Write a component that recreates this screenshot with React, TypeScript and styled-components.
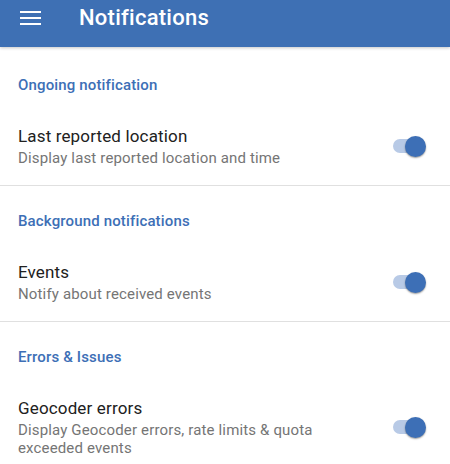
import React from "react";
import styled, { createGlobalStyle } from "styled-components";

const GlobalStyle = createGlobalStyle`
  html, body { margin: 0; padding: 0; background: #ffffff; }
  body { font-family: Roboto, "Noto Sans", Arial, sans-serif; -webkit-font-smoothing: antialiased; }
  * { box-sizing: border-box; }
`;

const Page = styled.div`
  width: 450px;
  height: 464px;
  overflow: hidden;
  background: #ffffff;
  position: relative;
`;

const Toolbar = styled.header`
  height: 47px;
  background: #3e70b4;
  display: flex;
  align-items: center;
  padding: 0 0 11px 20px;
  box-shadow: 0 1px 3px rgba(0, 0, 0, 0.22);
  position: relative;
  z-index: 1;
`;

const MenuIcon = styled.svg`
  width: 21px;
  height: 14px;
  flex: none;
  display: block;
`;

const Title = styled.h1`
  margin: 0 0 0 38px;
  font-size: 22px;
  line-height: 28px;
  font-weight: 500;
  color: #ffffff;
  letter-spacing: 0.25px;
`;

const Section = styled.section<{ $first?: boolean; $last?: boolean }>`
  padding: ${(p) => (p.$first ? "28px" : "25px")} 0 18px;
  border-bottom: ${(p) => (p.$last ? "none" : "1px solid #e0e0e0")};
`;

const Category = styled.div`
  padding-left: 18px;
  font-size: 15px;
  line-height: 20px;
  font-weight: 500;
  color: #3d6fb6;
  letter-spacing: 0.15px;
`;

const Row = styled.div`
  margin-top: 30px;
  display: flex;
  align-items: center;
  padding-left: 18px;
`;

const TextCol = styled.div`
  flex: 1;
  min-width: 0;
`;

const ItemTitle = styled.div`
  font-size: 17px;
  line-height: 22px;
  color: #212121;
  letter-spacing: 0.15px;
`;

const Summary = styled.div`
  font-size: 15px;
  line-height: 18px;
  color: #757575;
  padding-top: 2px;
  letter-spacing: 0.15px;
`;

const SwitchFrame = styled.div`
  width: 84px;
  flex: none;
  display: flex;
  justify-content: flex-end;
  padding-right: 24px;
`;

const Switch = styled.div`
  position: relative;
  width: 36px;
  height: 20px;
`;

const Track = styled.div<{ $on: boolean }>`
  position: absolute;
  left: 3px;
  right: 2px;
  top: 3px;
  height: 14px;
  border-radius: 7px;
  background: ${(p) => (p.$on ? "#b8cae6" : "#bdbdbd")};
`;

const Thumb = styled.div<{ $on: boolean }>`
  position: absolute;
  top: 0;
  ${(p) => (p.$on ? "right: 0;" : "left: 0;")}
  width: 21px;
  height: 21px;
  border-radius: 50%;
  background: ${(p) => (p.$on ? "#3d6fb6" : "#f5f5f5")};
  box-shadow: 0 1px 2px rgba(0, 0, 0, 0.3), 0 1px 1px rgba(0, 0, 0, 0.12);
`;

type Item = { title: string; summary: string; on: boolean };
type Group = { category: string; item: Item };

const groups: Group[] = [
  {
    category: "Ongoing notification",
    item: { title: "Last reported location", summary: "Display last reported location and time", on: true },
  },
  {
    category: "Background notifications",
    item: { title: "Events", summary: "Notify about received events", on: true },
  },
  {
    category: "Errors & Issues",
    item: {
      title: "Geocoder errors",
      summary: "Display Geocoder errors, rate limits & quota exceeded events",
      on: true,
    },
  },
];

const Toggle: React.FC<{ on: boolean }> = ({ on }) => (
  <Switch>
    <Track $on={on} />
    <Thumb $on={on} />
  </Switch>
);

export default function App() {
  return (
    <Page>
      <GlobalStyle />
      <Toolbar>
        <MenuIcon viewBox="0 0 21 14">
          <rect x="0" y="0" width="21" height="2" fill="#ffffff" />
          <rect x="0" y="6" width="21" height="2" fill="#ffffff" />
          <rect x="0" y="12" width="21" height="2" fill="#ffffff" />
        </MenuIcon>
        <Title>Notifications</Title>
      </Toolbar>
      {groups.map((g, i) => (
        <Section key={g.category} $first={i === 0} $last={i === groups.length - 1}>
          <Category>{g.category}</Category>
          <Row>
            <TextCol>
              <ItemTitle>{g.item.title}</ItemTitle>
              <Summary>{g.item.summary}</Summary>
            </TextCol>
            <SwitchFrame>
              <Toggle on={g.item.on} />
            </SwitchFrame>
          </Row>
        </Section>
      ))}
    </Page>
  );
}
